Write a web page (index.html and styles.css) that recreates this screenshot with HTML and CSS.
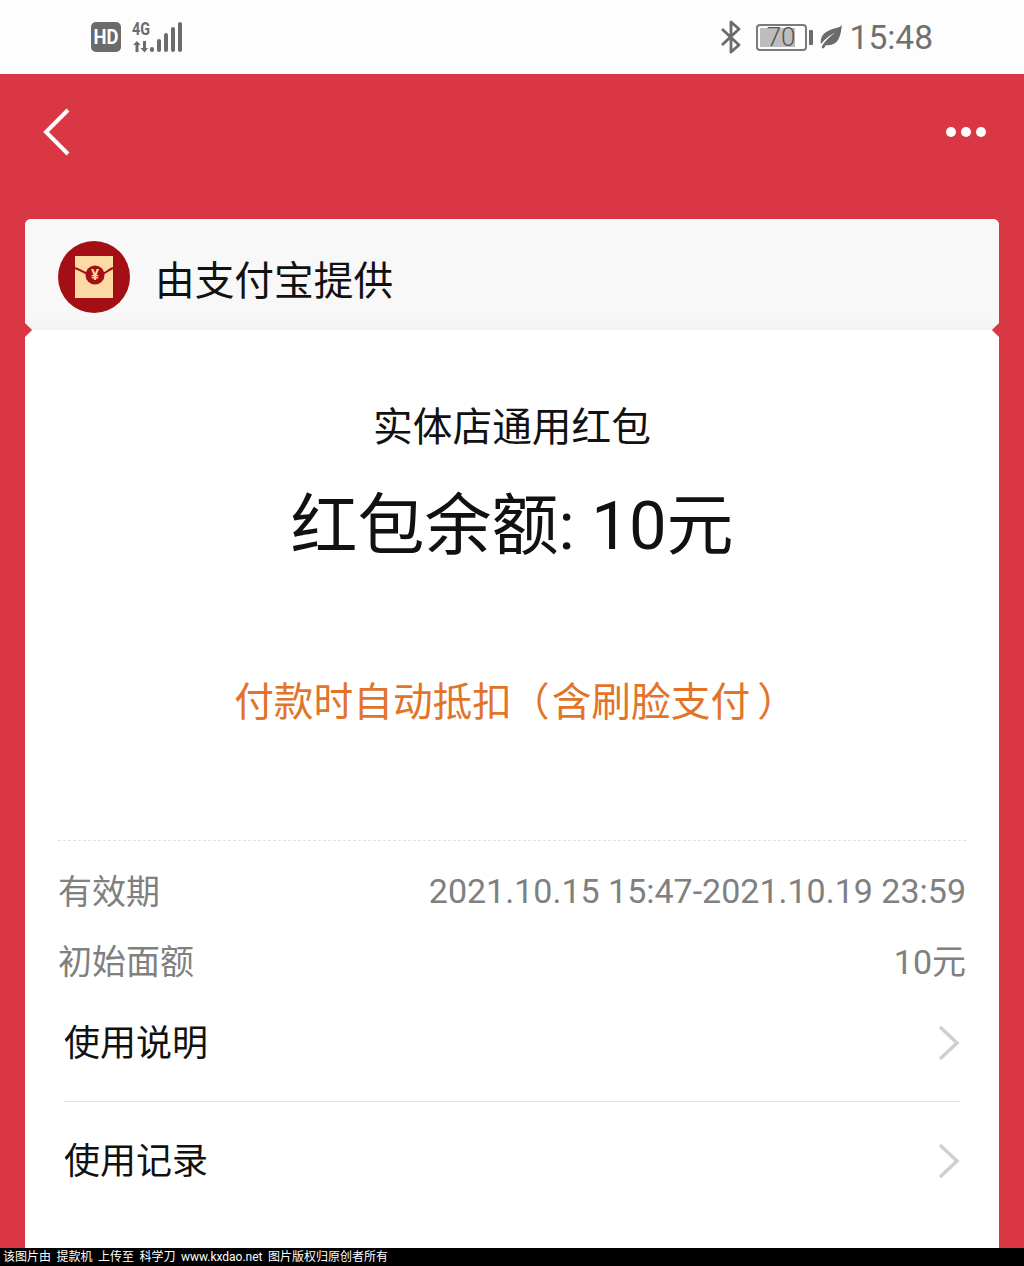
FILE: index.html
```html
<!DOCTYPE html>
<html lang="zh-CN">
<head>
  <meta charset="UTF-8" />
  <title>实体店通用红包</title>
  <link rel="stylesheet" href="styles.css">
</head>
<body>

  <div class="status-bar">
    <div class="status-left">
      <svg class="icon-hd" width="30" height="30" viewBox="0 0 30 30">
        <rect width="30" height="30" rx="5" fill="#6b6b6b"/>
        <text x="15" y="22" text-anchor="middle" textLength="25" lengthAdjust="spacingAndGlyphs" class="svg-label-hd">HD</text>
      </svg>
      <svg class="icon-signal" width="52" height="36" viewBox="0 -2 52 36">
        <text x="0" y="14" textLength="18" lengthAdjust="spacingAndGlyphs" class="svg-label-net">4G</text>
        <path d="M3.500 31v-7H1L5 20l3.500 4H6.500v7zM11 20v7H8.500l4 4.500 3.500-4.500h-2v-7z" fill="#6b6b6b"/>
        <rect x="18" y="26" width="4" height="5" rx="2" fill="#6b6b6b"/>
        <rect x="25" y="18" width="4" height="13" rx="2" fill="#6b6b6b"/>
        <rect x="32" y="12" width="4" height="19" rx="2" fill="#6b6b6b"/>
        <rect x="39" y="6" width="4" height="25" rx="2" fill="#6b6b6b"/>
        <rect x="46" y="1" width="4" height="30" rx="2" fill="#6b6b6b"/>
      </svg>
    </div>
    <div class="status-right">
      <svg class="icon-bt" width="22" height="34" viewBox="0 0 22 34">
        <path d="M2 9l17 16-8 7V2l8 7L2 25" fill="none" stroke="#6b6b6b" stroke-width="2.800" stroke-linejoin="round"/>
      </svg>
      <div class="battery">
        <div class="battery-body">
          <div class="battery-fill"></div>
          <span class="battery-num">70</span>
        </div>
        <div class="battery-cap"></div>
      </div>
      <svg class="icon-leaf" width="22" height="24" viewBox="0 0 22 24">
        <path d="M22 0C20 3 13 3 8 6C2 9 0 14 1 19C6 13 10 10 15 8C10 11 6 15 2 21C1 23 3 24 4 23L6 20C12 21 17 18 19 13C21 9 21 5 22 0Z" fill="#6b6b6b"/>
      </svg>
      <span class="status-time">15:48</span>
    </div>
  </div>

  <div class="page">
    <div class="nav">
      <svg width="30" height="50" viewBox="0 0 30 50">
        <path d="M26 3L4 25l22 22" fill="none" stroke="#fff" stroke-width="4"/>
      </svg>
      <div class="nav-more"><i></i><i></i><i></i></div>
    </div>

    <div class="card">
      <div class="card-head">
        <svg width="72" height="72" viewBox="0 0 72 72">
          <circle cx="36" cy="36" r="36" fill="#a30f14"/>
          <rect x="17" y="15" width="38" height="42" fill="#fdd9a4"/>
          <path d="M17 27c6 2 9 5 13 6h14c4-1 6-4 11-6" fill="none" stroke="#a30f14" stroke-width="2"/>
          <circle cx="37" cy="34" r="9.500" fill="#a30f14"/>
          <text x="37" y="39" text-anchor="middle" class="svg-label-yen">¥</text>
        </svg>
        <span class="card-head-text">由支付宝提供</span>
      </div>
      <i class="notch notch-left"></i>
      <i class="notch notch-right"></i>

      <div class="card-body">
        <div class="summary">
          <div class="summary-name">实体店通用红包</div>
          <div class="summary-balance">红包余额: 10元</div>
          <div class="summary-tip">付款时自动抵扣<span class="paren-open">（</span>含刷脸支付<span class="paren-close">）</span></div>
        </div>

        <div class="info">
          <div class="info-row"><span>有效期</span><span>2021.10.15 15:47-2021.10.19 23:59</span></div>
          <div class="info-row"><span>初始面额</span><span>10元</span></div>
        </div>

        <div class="link-row link-row-first">
          <span>使用说明</span>
          <svg width="22" height="36" viewBox="0 0 22 36"><path d="M2 2l17 16L2 34" fill="none" stroke="#cfcfcf" stroke-width="3.500"/></svg>
        </div>
        <div class="link-row">
          <span>使用记录</span>
          <svg width="22" height="36" viewBox="0 0 22 36"><path d="M2 2l17 16L2 34" fill="none" stroke="#cfcfcf" stroke-width="3.500"/></svg>
        </div>
      </div>
    </div>
  </div>

  <div class="watermark">该图片由 提款机 上传至 科学刀 www.kxdao.net 图片版权归原创者所有</div>

</body>
</html>
```

FILE: styles.css
```css
* {
  box-sizing: border-box;
  margin: 0;
  padding: 0;
}
html,
body {
  height: 1266px;
  overflow: hidden;
}
body {
  font-family: Roboto, "Noto Sans CJK SC", sans-serif;
  background: #fff;
  display: flex;
  flex-direction: column;
}

/* Status bar */
.status-bar {
  height: 74px;
  flex: none;
  background: #fdfdfd;
  display: flex;
  justify-content: space-between;
  align-items: center;
  padding: 0 91px 0 91px;
}
.status-left,
.status-right {
  display: flex;
  align-items: center;
}
.status-left {
  gap: 11px;
}
.status-right {
  color: #6b6b6b;
}
.svg-label-hd {
  font-family: Roboto, sans-serif;
  font-size: 21px;
  font-weight: 700;
  fill: #fff;
}
.svg-label-net {
  font-family: Roboto, sans-serif;
  font-size: 18px;
  font-weight: 700;
  fill: #6b6b6b;
}
.svg-label-yen {
  font-family: Roboto, sans-serif;
  font-size: 15px;
  font-weight: 700;
  fill: #fdd9a4;
}
.battery {
  display: flex;
  align-items: center;
  margin-left: 14px;
}
.battery-body {
  position: relative;
  width: 51px;
  height: 27px;
  border: 2px solid #7a7a7a;
  border-radius: 4px;
  padding: 2px;
}
.battery-fill {
  width: 82%;
  height: 100%;
  background: #bdbdbd;
}
.battery-num {
  position: absolute;
  inset: 0;
  font-size: 26px;
  line-height: 23px;
  text-align: center;
  font-weight: 300;
  color: #555;
}
.battery-cap {
  width: 4px;
  height: 15px;
  margin-left: 2px;
  background: #6b6b6b;
  border-radius: 1px;
}
.icon-leaf {
  margin-left: 7px;
}
.status-time {
  font-size: 33.500px;
  margin-left: 8px;
  color: #707070;
}

/* Red area */
.page {
  flex: 1;
  min-height: 0;
  background: #d93743;
  display: flex;
  flex-direction: column;
  overflow: hidden;
}
.nav {
  height: 145px;
  flex: none;
  display: flex;
  justify-content: space-between;
  align-items: center;
  padding: 0 38px 30px 42px;
}
.nav-more {
  display: flex;
  gap: 5px;
}
.nav-more i {
  width: 10px;
  height: 10px;
  border-radius: 50%;
  background: #fff;
}

/* Card */
.card {
  position: relative;
  flex: 1;
  margin: 0 25px;
  border-radius: 6px 6px 0 0;
  background: #fff;
  overflow: hidden;
}
.card-head {
  height: 111px;
  background: linear-gradient(#f8f8f8 85%, #f4f4f4);
  display: flex;
  align-items: center;
  gap: 25px;
  padding: 5px 0 0 33px;
}
.card-head-text {
  font-size: 39.700px;
  color: #111;
}
.notch {
  position: absolute;
  top: 106px;
  width: 10px;
  height: 10px;
  background: #d93743;
  transform: rotate(45deg);
}
.notch-left {
  left: -5px;
}
.notch-right {
  right: -5px;
}

.card-body {
  padding: 0 33px;
}
.summary {
  height: 511px;
  border-bottom: 1px dashed #e2e2e2;
  text-align: center;
  color: #111;
  padding-top: 69px;
}
.summary-name {
  font-size: 39.700px;
  line-height: 58px;
}
.summary-balance {
  font-size: 67px;
  line-height: 96px;
  margin-top: 21px;
}
.summary-tip {
  font-size: 39.700px;
  line-height: 58px;
  margin-top: 100px;
  color: #e2742a;
  white-space: nowrap;
  text-spacing-trim: space-all;
}
.paren-open {
  margin: 0 2px 0 -2px;
}
.paren-close {
  margin: 0 -7px 0 7px;
}

.info {
  color: #808080;
  font-size: 34px;
}
.info-row {
  display: flex;
  justify-content: space-between;
  align-items: center;
  height: 68px;
}
.info-row:first-child {
  margin-top: 16px;
}
.info-row:first-child span:first-child {
  margin-bottom: 4px;
}

.link-row {
  display: flex;
  justify-content: space-between;
  align-items: center;
  height: 118px;
  margin: 0 6px;
  font-size: 36px;
  color: #111;
}
.link-row span {
  margin-bottom: 6px;
}
.link-row-first {
  height: 109px;
  padding-bottom: 9px;
  border-bottom: 1px solid #e2e2e2;
}

/* Watermark strip */
.watermark {
  height: 18px;
  flex: none;
  background: #000;
  color: #fff;
  font-size: 12px;
  line-height: 18px;
  padding-left: 3px;
  white-space: nowrap;
  word-spacing: 2.500px;
}
```
